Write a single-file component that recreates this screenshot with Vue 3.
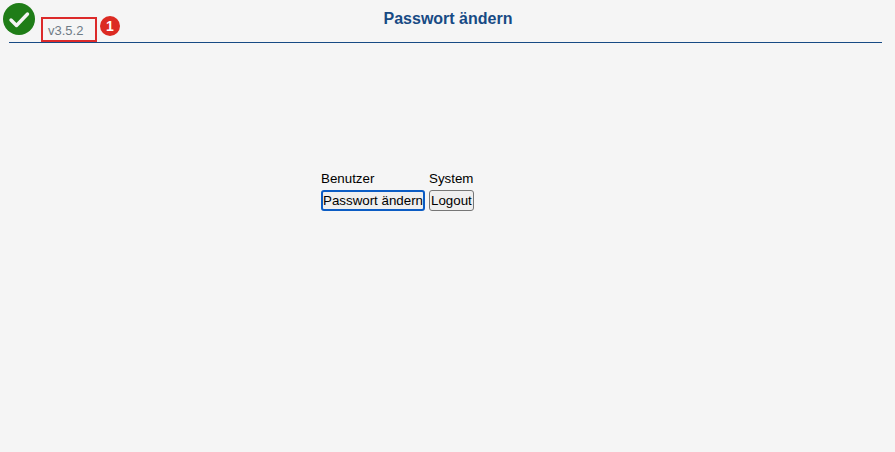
<script setup>
const groups = [
  { label: 'Benutzer', buttons: [{ text: 'Passwort ändern', focused: true }] },
  { label: 'System', buttons: [{ text: 'Logout', focused: false }] },
]
</script>

<template>
  <div class="page">
    <header class="head">
      <div class="status">
        <svg class="check" width="32" height="32" viewBox="0 0 32 32">
          <circle cx="16" cy="16" r="16" fill="#1f7d17" />
          <path d="M8 17l5.5 5.5L24.5 11" fill="none" stroke="#f4f4f4" stroke-width="3.4" stroke-linecap="round" stroke-linejoin="round" />
        </svg>
        <div class="version">v3.5.2</div>
        <div class="badge">1</div>
      </div>
      <h1 class="title">Passwort ändern</h1>
    </header>
    <main class="menu">
      <div v-for="g in groups" :key="g.label" class="group">
        <div class="label">{{ g.label }}</div>
        <button v-for="b in g.buttons" :key="b.text" class="btn" :class="{ focused: b.focused }">{{ b.text }}</button>
      </div>
    </main>
  </div>
</template>

<style scoped>
.page {
  width: 895px;
  height: 452px;
  background: #f5f5f5;
  font-family: "Liberation Sans", Arial, sans-serif;
  overflow: hidden;
}
.head {
  position: relative;
  height: 43px;
  margin: 0 13px 0 9px;
  border-bottom: 1px solid #174a84;
  box-sizing: border-box;
  display: flex;
  justify-content: center;
}
.status {
  position: absolute;
  left: -6px;
  top: 3px;
  display: flex;
  align-items: flex-start;
}
.check { display: block; }
.version {
  width: 56px;
  height: 25px;
  margin: 14px 0 0 6px;
  border: 2px solid #dc2a2a;
  box-sizing: border-box;
  color: #6f7b85;
  font-size: 13px;
  line-height: 24px;
  padding-left: 5px;
}
.badge {
  width: 20px;
  height: 20px;
  margin: 13px 0 0 3px;
  border-radius: 50%;
  background: #dc2a22;
  color: #fff;
  font-size: 14px;
  font-weight: 700;
  line-height: 20px;
  text-align: center;
}
.title {
  margin: 10px 0 0;
  padding-left: 5px;
  color: #174a84;
  font-size: 16px;
  line-height: 18px;
  font-weight: 700;
}
.menu {
  display: flex;
  gap: 4px;
  margin: 128px 0 0 321px;
}
.group {
  display: flex;
  flex-direction: column;
  align-items: flex-start;
}
.label {
  color: #000;
  font-size: 13.33px;
  line-height: 15px;
  margin-bottom: 4px;
}
.btn {
  height: 21px;
  padding: 0 1px;
  border: 1px solid #767676;
  border-radius: 3px;
  background: #efefef;
  color: #000;
  font-family: inherit;
  font-size: 13.33px;
  line-height: 15px;
}
.btn.focused {
  border: 2px solid #0b5cc4;
  padding: 0;
}
</style>
